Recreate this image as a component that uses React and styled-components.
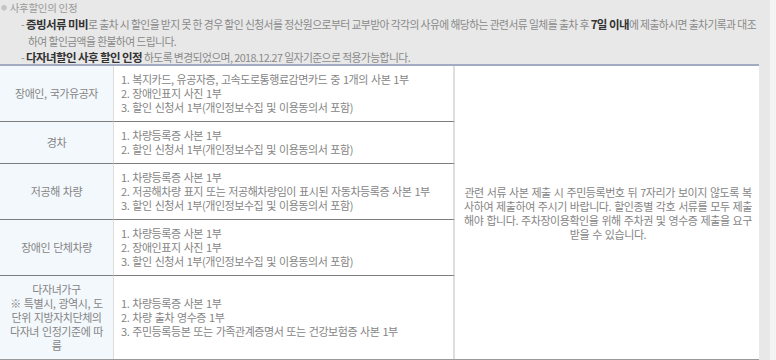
import React from "react";
import styled, { createGlobalStyle } from "styled-components";

const GlobalStyle = createGlobalStyle`
  html, body {
    margin: 0;
    padding: 0;
    background: #f3f3f3;
  }
  body {
    font-family: "Noto Sans CJK KR", "Noto Sans", sans-serif;
  }
`;

const Page = styled.div`
  width: 770px;
  height: 360px;
  background: #e8e8e8;
  overflow: hidden;
`;

const Title = styled.div`
  display: flex;
  align-items: center;
  gap: 3px;
  height: 15px;
  padding-left: 1px;
  color: #999;
  font-size: 10.5px;
  letter-spacing: -0.3px;
`;

const Bullet = styled.span`
  font-size: 6px;
  color: #c4c4c4;
`;

const Note = styled.p`
  margin: 0;
  padding: ${(p) => (p.$last ? "0 12px 0 28px" : "1px 12px 0 28px")};
  line-height: ${(p) => (p.$last ? "14px" : "17px")};
  text-indent: -7px;
  color: #8a8a8a;
  font-size: 10.8px;
  letter-spacing: -0.58px;
`;

const Strong = styled.b`
  color: #333;
  font-weight: 700;
  font-size: 11.5px;
  line-height: 1;
`;

const Table = styled.div`
  display: grid;
  grid-template-columns: 114px 341px 1fr;
  width: 759px;
  background: #fff;
  border-top: 2px solid #a3abc2;
  border-bottom: 2px solid #9a9a9a;
  color: #858585;
  font-size: 11px;
  line-height: 14px;
  letter-spacing: -0.45px;
  word-spacing: 1px;
`;

const Label = styled.div`
  grid-column: 1;
  display: flex;
  align-items: center;
  justify-content: center;
  padding: 6px 8px 7px;
  background: #f3f8fc;
  border-right: 1px solid #dcdcdc;
  border-bottom: ${(p) => (p.$last ? "none" : "1px solid #7d7d7d")};
  text-align: center;
  word-break: break-all;
`;

const Items = styled.ol`
  grid-column: 2;
  margin: 0;
  display: flex;
  flex-direction: column;
  justify-content: center;
  padding: 6px 7px 7px;
  list-style: none;
  border-right: 2px solid #dedede;
  border-bottom: ${(p) => (p.$last ? "none" : "1px solid #7d7d7d")};
`;

const Aside = styled.div`
  grid-column: 3;
  grid-row: 1 / span 5;
  display: flex;
  align-items: center;
  justify-content: center;
  padding: 0 5px 0 7px;
  text-align: center;
  word-break: break-all;
`;

const rows = [
  {
    label: "장애인, 국가유공자",
    items: [
      "복지카드, 유공자증, 고속도로통행료감면카드 중 1개의 사본 1부",
      "장애인표지 사진 1부",
      "할인 신청서 1부(개인정보수집 및 이용동의서 포함)",
    ],
  },
  {
    label: "경차",
    items: ["차량등록증 사본 1부", "할인 신청서 1부(개인정보수집 및 이용동의서 포함)"],
  },
  {
    label: "저공해 차량",
    items: [
      "차량등록증 사본 1부",
      "저공해차량 표지 또는 저공해차량임이 표시된 자동차등록증 사본 1부",
      "할인 신청서 1부(개인정보수집 및 이용동의서 포함)",
    ],
  },
  {
    label: "장애인 단체차량",
    items: [
      "차량등록증 사본 1부",
      "장애인표지 사진 1부",
      "할인 신청서 1부(개인정보수집 및 이용동의서 포함)",
    ],
  },
  {
    label: (
      <>
        다자녀가구
        <br />※ 특별시, 광역시, 도단위 지방자치단체의 다자녀 인정기준에 따름
      </>
    ),
    items: [
      "차량등록증 사본 1부",
      "차량 출차 영수증 1부",
      "주민등록등본 또는 가족관계증명서 또는 건강보험증 사본 1부",
    ],
  },
];

export default function App() {
  return (
    <Page>
      <GlobalStyle />
      <Title>
        <Bullet>●</Bullet>사후할인의 인정
      </Title>
      <Note>
        - <Strong>증빙서류 미비</Strong>로 출차 시 할인을 받지 못 한 경우 할인 신청서를 정산원으로부터
        교부받아 각각의 사유에 해당하는 관련서류 일체를 출차 후 <Strong>7일 이내</Strong>에 제출하시면
        출차기록과 대조하여 할인금액을 환불하여 드립니다.
      </Note>
      <Note $last>
        - <Strong>다자녀할인 사후 할인 인정</Strong> 하도록 변경되었으며, 2018.12.27 일자기준으로
        적용가능합니다.
      </Note>
      <Table>
        {rows.map((row, i) => {
          const last = i === rows.length - 1;
          return (
            <React.Fragment key={i}>
              <Label $last={last} style={{ gridRow: i + 1 }}>
                <span>{row.label}</span>
              </Label>
              <Items $last={last} style={{ gridRow: i + 1 }}>
                {row.items.map((t, j) => (
                  <li key={j}>
                    {j + 1}. {t}
                  </li>
                ))}
              </Items>
            </React.Fragment>
          );
        })}
        <Aside>
          관련 서류 사본 제출 시 주민등록번호 뒤 7자리가 보이지 않도록 복사하여 제출하여 주시기
          바랍니다. 할인종별 각호 서류를 모두 제출해야 합니다. 주차장이용확인을 위해 주차권 및 영수증
          제출을 요구받을 수 있습니다.
        </Aside>
      </Table>
    </Page>
  );
}
